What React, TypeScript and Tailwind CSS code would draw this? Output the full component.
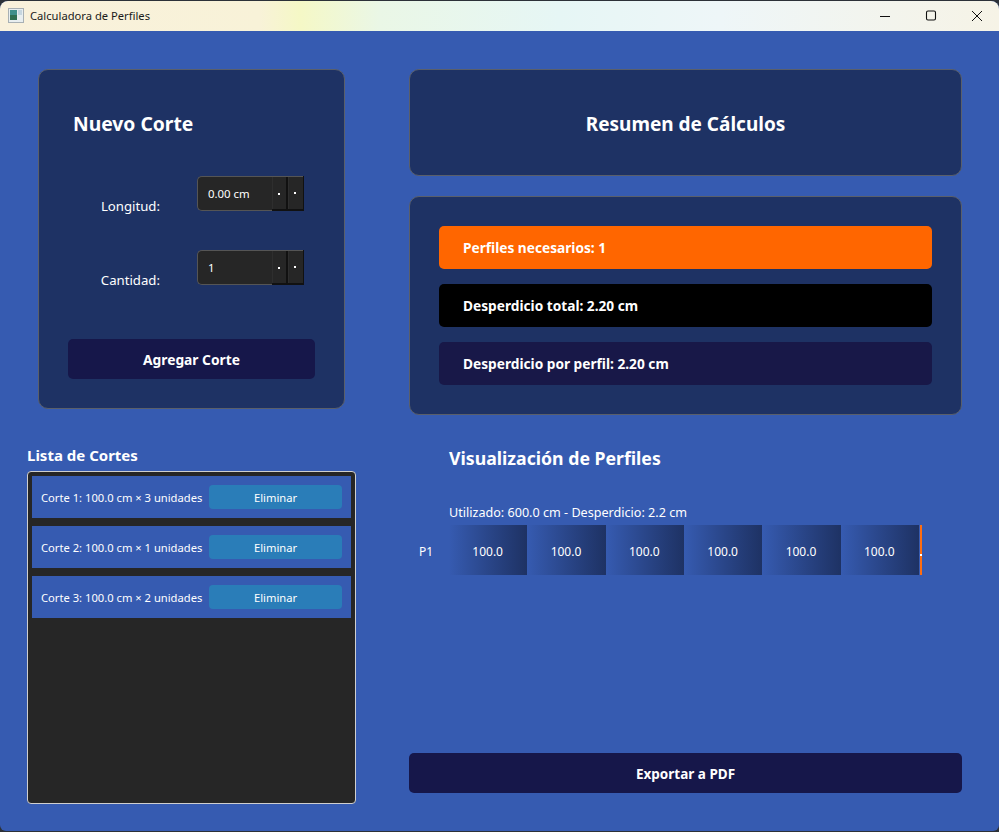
import React from "react";

const font = { fontFamily: '"Noto Sans", "Open Sans", sans-serif' };

function Spin({ value }: { value: string }) {
  return (
    <div className="flex w-[107px] h-[35px] shrink-0">
      <div className="flex-1 flex items-center pl-[10px] pt-[1px] bg-[#262626] border border-[#555555] border-r-0 rounded-l-[5px] text-[11.4px] text-white">
        {value}
      </div>
      <div className="flex border-t border-[#555555] border-b-[#111111] border-b-2 bg-[#262626]">
        <div className="w-[16px] flex items-center justify-center pr-[2px] pt-[1px] border-l border-r-2 border-l-[#2e2e2e] border-r-[#111111]">
          <span className="w-[2px] h-[2px] bg-white" />
        </div>
        <div className="w-[15px] flex items-center justify-center pr-[2px] border-l border-l-[#2e2e2e]">
          <span className="w-[2px] h-[2px] bg-white" />
        </div>
      </div>
      <div className="w-[1px] bg-[#111111]" />
    </div>
  );
}

function FormRow({ label, value }: { label: string; value: string }) {
  return (
    <div className="flex items-start h-[74px]">
      <div className="w-[92px] text-right text-[13.2px] text-white pt-[18px] mr-[37px] leading-[24px]">{label}</div>
      <Spin value={value} />
    </div>
  );
}

function CutRow({ text }: { text: string }) {
  return (
    <div className="h-[42px] bg-[#365bb1] flex items-center pl-[9px] pr-[9px] mb-[8px]">
      <span className="text-[11.2px] text-white whitespace-nowrap w-[168px] shrink-0 pt-[2px]">{text}</span>
      <button className="flex-1 h-[24px] bg-[#2a7db8] rounded-[4px] text-white text-[11.2px] pt-[2px]">Eliminar</button>
    </div>
  );
}

function Stat({ text, cls }: { text: string; cls: string }) {
  return (
    <div className={`h-[43px] rounded-[5px] flex items-center pl-[24px] pt-[2px] text-white font-bold text-[13.7px] ${cls}`}>{text}</div>
  );
}

function Segment() {
  return (
    <div className="w-[78.33px] h-[50px] flex items-center justify-center pt-[3px] pr-[1px] text-[12px] text-white bg-gradient-to-r from-[#365bb1] to-[#1e3264]">
      100.0
    </div>
  );
}

export default function App() {
  return (
    <div className="w-[999px] h-[832px] bg-[#2c3138] overflow-hidden pt-[1px]" style={font}>
      <div className="w-full h-[830px] flex flex-col rounded-t-[8px] rounded-b-[6px] overflow-hidden bg-[#365bb1]">
        <div className="h-[30px] shrink-0 flex items-center bg-[linear-gradient(90deg,#f9f1dc_0%,#f8f2d8_26%,#f5f8c6_30%,#eaf7e6_38%,#e6f6f5_56%,#eef6f8_72%,#f6f3e6_100%)]">
          <svg width="16" height="16" viewBox="0 0 16 16" className="ml-[8px]">
            <rect x="0.5" y="0.5" width="15" height="14" fill="#e8eef0" stroke="#a8b0b4" />
            <rect x="2" y="2" width="7" height="10" fill="#3f8f8c" />
            <rect x="2" y="7" width="7" height="5" fill="#2f6e52" />
            <rect x="10" y="2" width="4" height="5" fill="#c6d6e0" />
          </svg>
          <span className="ml-[6px] text-[11.2px] text-[#1a1a1a]">Calculadora de Perfiles</span>
          <div className="ml-auto flex items-center text-black">
            <svg width="12" height="12" viewBox="0 0 12 12" className="mr-[34px]"><path d="M1 6.5H11" stroke="#111" strokeWidth="1" /></svg>
            <svg width="12" height="12" viewBox="0 0 12 12" className="mr-[34px]"><rect x="1.5" y="1" width="9" height="9" rx="1.5" fill="none" stroke="#111" strokeWidth="1.1" /></svg>
            <svg width="12" height="12" viewBox="0 0 12 12" className="mr-[16px]"><path d="M1 1L11 11M11 1L1 11" stroke="#111" strokeWidth="1" /></svg>
          </div>
        </div>
        <div className="flex-1 flex">
          <div className="w-[382px] ml-[27px] pt-[38px] flex flex-col shrink-0">
            <div className="ml-[11px] w-[307px] h-[340px] bg-[#1e3264] border border-[#5a5f6a] rounded-[10px] px-[29px] flex flex-col">
              <div className="text-[19.3px] font-bold text-white pl-[5px] pt-[40px] leading-[28px]">Nuevo Corte</div>
              <div className="mt-[38px]">
                <FormRow label="Longitud:" value="0.00 cm" />
                <FormRow label="Cantidad:" value="1" />
              </div>
              <button className="mt-[15px] h-[40px] pt-[2px] w-[247px] bg-[#16174a] rounded-[5px] text-white font-bold text-[13.8px]">Agregar Corte</button>
            </div>
            <div className="mt-[36px] text-[15px] font-bold text-white leading-[20px]">Lista de Cortes</div>
            <div className="mt-[6px] w-[329px] h-[333px] bg-[#262626] border border-[#cfcfcf] rounded-[4px] p-[4px]">
              <CutRow text="Corte 1: 100.0 cm × 3 unidades" />
              <CutRow text="Corte 2: 100.0 cm × 1 unidades" />
              <CutRow text="Corte 3: 100.0 cm × 2 unidades" />
            </div>
          </div>
          <div className="w-[553px] pt-[38px] flex flex-col">
            <div className="h-[107px] pt-[3px] bg-[#1e3264] border border-[#5a5f6a] rounded-[10px] flex items-center justify-center text-[19px] font-bold text-white">
              Resumen de Cálculos
            </div>
            <div className="mt-[20px] h-[219px] bg-[#1e3264] border border-[#5a5f6a] rounded-[10px] px-[29px] pt-[29px] flex flex-col gap-[15px]">
              <Stat text="Perfiles necesarios: 1" cls="bg-[#ff6600]" />
              <Stat text="Desperdicio total: 2.20 cm" cls="bg-black" />
              <Stat text="Desperdicio por perfil: 2.20 cm" cls="bg-[#181848]" />
            </div>
            <div className="mt-[29px] pl-[40px] text-[17.7px] font-bold text-white leading-[28px]">Visualización de Perfiles</div>
            <div className="mt-[32px] pl-[40px] text-[12.6px] text-white leading-[18px]">Utilizado: 600.0 cm - Desperdicio: 2.2 cm</div>
            <div className="mt-[3px] flex items-center">
              <div className="w-[40px] pl-[10px] pt-[3px] text-[12px] text-white">P1</div>
              <Segment /><Segment /><Segment /><Segment /><Segment /><Segment />
              <div className="w-[2px] h-[50px] ml-[1px] bg-[#ff6d10] flex items-center pt-[9px]">
                <span className="w-[2px] h-[2px] bg-white" />
              </div>
            </div>
            <button className="mt-[178px] h-[40px] pt-[2px] bg-[#16174a] rounded-[5px] text-white font-bold text-[13.5px]">Exportar a PDF</button>
          </div>
        </div>
      </div>
    </div>
  );
}
